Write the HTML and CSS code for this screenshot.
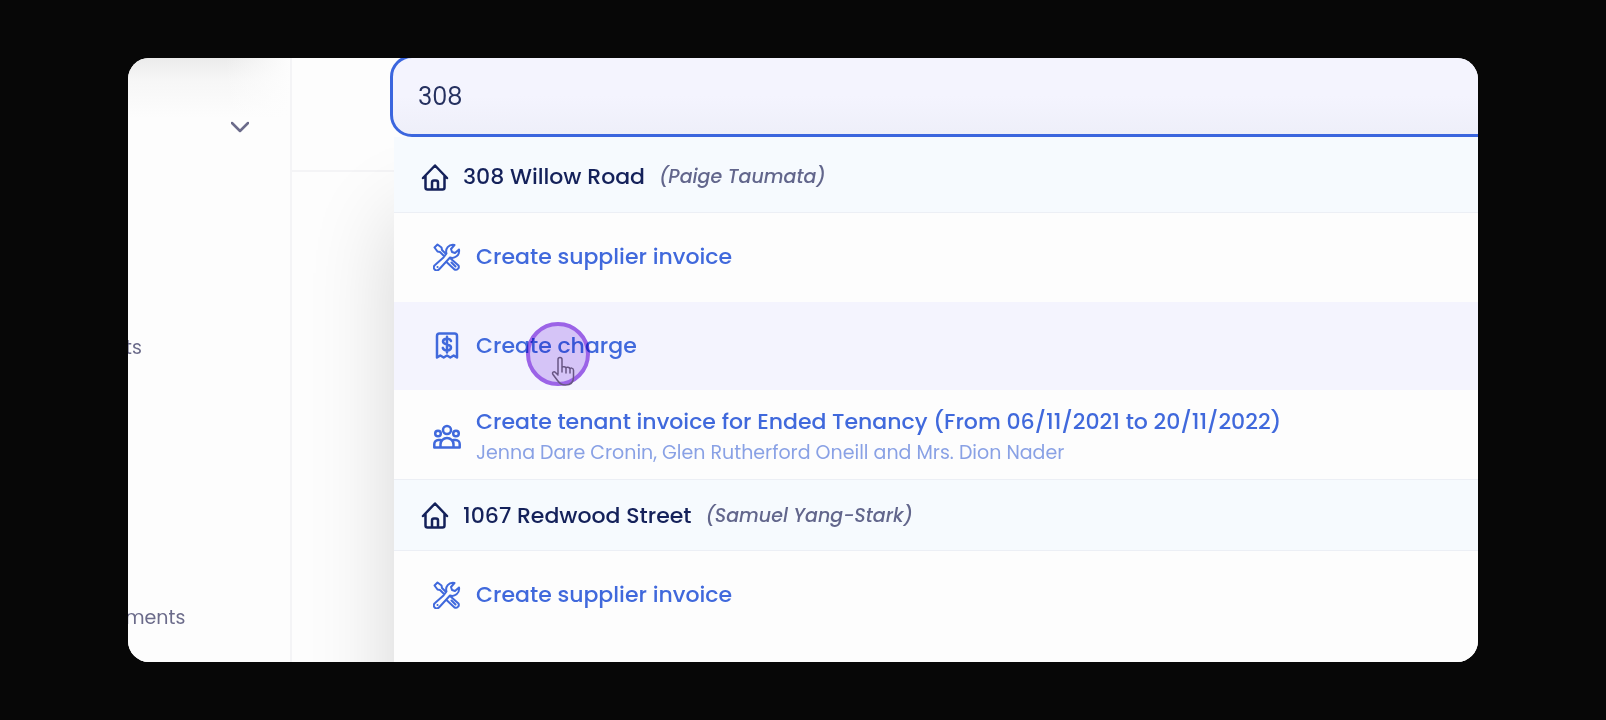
FILE: index.html
```html
<!DOCTYPE html>
<html lang="en">

<head>
    <meta charset="UTF-8">
    <meta name="viewport" content="width=device-width, initial-scale=1.0">
    <title>Property search</title>
    <link rel="stylesheet" href="styles.css">
</head>

<body>
    <!-- shared icons -->
    <svg class="icon-defs" width="0" height="0" aria-hidden="true">
        <symbol id="icon-home" viewBox="0 0 28 28">
            <path d="M2 15 14 2.500 26 15M4.500 13v11.500a2 2 0 0 0 2 2h15a2 2 0 0 0 2-2V13M11 26v-6.500a2 2 0 0 1 2-2h2a2 2 0 0 1 2 2V26" />
        </symbol>
        <symbol id="icon-tools" viewBox="0 0 28 28">
            <path d="M12.500 10.500 9 7 8.500 4.500 4.500 1.500 1.500 4.500l3 4L7 9l3.500 3.500" />
            <path d="M10.500 14.500 2 22a3 3 0 1 0 4.200 4.200L17 14.500c4.500 1.500 10-2 9-8l-4 3.500-3-1-1-3 3.500-4c-6-1-9.500 4-8 8.500l-3 4" />
            <path d="m17 15 8.500 7.500a3 3 0 0 1-4 4L13.500 19M18.500 19.500l4 4M4.500 24h.1" />
        </symbol>
        <symbol id="icon-receipt" viewBox="0 0 28 28">
            <path d="M4 25.500V4a2.500 2.500 0 0 1 2.500-2.500h15A2.500 2.500 0 0 1 24 4v21.500l-3.300-2-3.400 2-3.300-2-3.300 2-3.400-2z" />
            <path d="M18 9c-.6-1.600-2-2.300-4-2.300-2.400 0-4 1-4 2.800 0 4.200 8 1.800 8 6 0 1.800-1.600 2.900-4 2.900-2.200 0-3.700-.8-4.200-2.500M14 4.800v15.600" />
        </symbol>
        <symbol id="icon-people" viewBox="0 0 28 28">
            <circle cx="14" cy="7" r="4" />
            <circle cx="5" cy="10.500" r="2.800" />
            <circle cx="23" cy="10.500" r="2.800" />
            <path d="M7.500 24.500v-3a6.500 6.500 0 0 1 13 0v3zM7.500 24.500H1.300V21a4 4 0 0 1 4-4h2.200M20.500 24.500h6.200V21a4 4 0 0 0-4-4h-2.200" />
        </symbol>
    </svg>

    <div class="window">
        <nav class="sidebar">
            <button class="toggle" type="button" aria-label="Toggle menu">
                <svg width="18" height="12" viewBox="0 0 18 12"><path d="m1 2 8 8 8-8" /></svg>
            </button>
            <div class="side-links">
                <a href="#">ts</a>
                <a href="#">ments</a>
            </div>
        </nav>

        <main class="content">
            <header class="topbar">
                <div class="search">
                    <input class="search-input" type="text" value="308" aria-label="Search">

                    <!-- search results -->
                    <div class="results">
                        <div class="property first">
                            <svg class="icon"><use href="#icon-home" /></svg>
                            <span class="address">308 Willow Road</span>
                            <em class="owner">(Paige Taumata)</em>
                        </div>
                        <a class="action" href="#">
                            <svg class="icon"><use href="#icon-tools" /></svg>
                            <span class="label">Create supplier invoice</span>
                        </a>
                        <a class="action active" href="#">
                            <svg class="icon bold"><use href="#icon-receipt" /></svg>
                            <span class="label">Create charge</span>
                            <span class="tap">
                                <svg class="hand" width="24" height="30" viewBox="0 0 24 30">
                                    <path d="M7 18V3.500a2 2 0 0 1 4 0V12c0-2 4-1.800 4 .5 0-2 4-1.500 4 .7 0-1.700 3.500-1.500 3.500 1V21c0 5-3 8-8 8-4 0-6-1.500-8-4.500L2 18.500c-1.500-2.300 1-3.500 2.500-2L7 19M11 12v4M15 12.500V17M19 13.500V17" />
                                </svg>
                            </span>
                        </a>
                        <a class="action tenancy" href="#">
                            <svg class="icon bold"><use href="#icon-people" /></svg>
                            <span class="text">
                                <span class="label">Create tenant invoice for Ended Tenancy (From 06/11/2021 to 20/11/2022)</span>
                                <span class="tenants">Jenna Dare Cronin, Glen Rutherford Oneill and Mrs. Dion Nader</span>
                            </span>
                        </a>
                        <div class="property">
                            <svg class="icon"><use href="#icon-home" /></svg>
                            <span class="address">1067 Redwood Street</span>
                            <em class="owner">(Samuel Yang-Stark)</em>
                        </div>
                        <a class="action" href="#">
                            <svg class="icon"><use href="#icon-tools" /></svg>
                            <span class="label">Create supplier invoice</span>
                        </a>
                    </div>
                </div>
            </header>
        </main>
    </div>
</body>

</html>
```
FILE: styles.css
```css
* {
    box-sizing: border-box;
}

body {
    margin: 0;
    padding: 58px 128px;
    height: 100vh;
    background-color: #070707;
    font-family: Poppins, Inter, sans-serif;
}

a {
    color: inherit;
    text-decoration: none;
}

svg {
    fill: none;
    stroke: currentColor;
    stroke-width: 2;
    stroke-linecap: round;
    stroke-linejoin: round;
}

.icon-defs {
    position: absolute;
}

.window {
    display: flex;
    height: 100%;
    overflow: hidden;
    border-radius: 21px;
    background-color: #fdfdfd;
}

/* sidebar */
.sidebar {
    flex: none;
    width: 164px;
    border-right: 2px solid #f4f4f6;
    background: linear-gradient(to right, rgba(253, 253, 253, 0) 60%, #fdfdfd), linear-gradient(#ebebeb, #f7f7f7 24px, #fdfdfd 60px);
    color: #6b6b8a;
}

.toggle {
    display: flex;
    align-items: center;
    justify-content: flex-end;
    width: 100%;
    height: 138px;
    padding: 0 41px 0 0;
    border: 0;
    background: none;
    color: inherit;
}

.toggle svg {
    stroke-width: 2.5;
}

.side-links {
    display: flex;
    flex-direction: column;
    gap: 240px;
    margin-left: -3px;
    padding-top: 137px;
    font-size: 19px;
    line-height: 30px;
}

/* search */
.content {
    flex: 1;
    min-width: 0;
}

.topbar {
    height: 117px;
    padding-left: 98px;
    border-bottom: 2px solid #f4f4f6;
}

.search {
    position: relative;
    margin-top: -3px;
    margin-right: -40px;
}

.search-input {
    display: block;
    width: 100%;
    height: 82px;
    padding: 0 25px;
    border: 3px solid #3b66de;
    border-radius: 22px;
    outline: 0;
    background: linear-gradient(#f4f4fe 50%, #eeeff9);
    color: #25305f;
    font: inherit;
    font-size: 24px;
}

.results {
    position: absolute;
    top: 100%;
    left: 4px;
    right: 0;
    height: 700px;
    background-color: #fdfdfd;
    box-shadow: 0 80px 80px rgba(0, 0, 0, .16);
}

.property {
    display: flex;
    align-items: center;
    height: 72px;
    padding-left: 27px;
    border-top: 1px solid #eceff5;
    border-bottom: 1px solid #eceff5;
    background-color: #f6fafe;
    color: #14215a;
}

.property.first {
    height: 76px;
    padding-top: 4px;
    border-top: 0;
}

.icon {
    flex: none;
    width: 28px;
    height: 28px;
}

.icon.bold,
.property .icon {
    stroke-width: 2.5;
}

.address {
    margin-left: 14px;
    font-size: 22px;
    font-weight: 500;
}

.owner {
    margin-left: 14px;
    color: #62668c;
    font-size: 19px;
    font-weight: 500;
}

.action {
    position: relative;
    display: flex;
    align-items: center;
    height: 88px;
    padding-left: 39px;
    color: #4069dc;
}

.action.active {
    margin-top: 1px;
    background-color: #f4f4fe;
}

.action.tenancy {
    height: 89px;
    padding-top: 4px;
}

.action .label {
    font-size: 22px;
    font-weight: 500;
    line-height: 32px;
}

.action .icon {
    margin-right: 15px;
}

.text {
    display: flex;
    flex-direction: column;
}

.tenants {
    color: #89a1e5;
    font-size: 19px;
    line-height: 30px;
}

/* pointer */
.tap {
    position: absolute;
    top: 20px;
    left: 132px;
    width: 64px;
    height: 64px;
    border: 4px solid #a267e8;
    border-radius: 50%;
    background-color: #dfcdf8;
    mix-blend-mode: multiply;
}

.hand {
    position: absolute;
    top: 30px;
    left: 21px;
    color: #6d5a85;
    stroke-width: 1.5;
}
```
